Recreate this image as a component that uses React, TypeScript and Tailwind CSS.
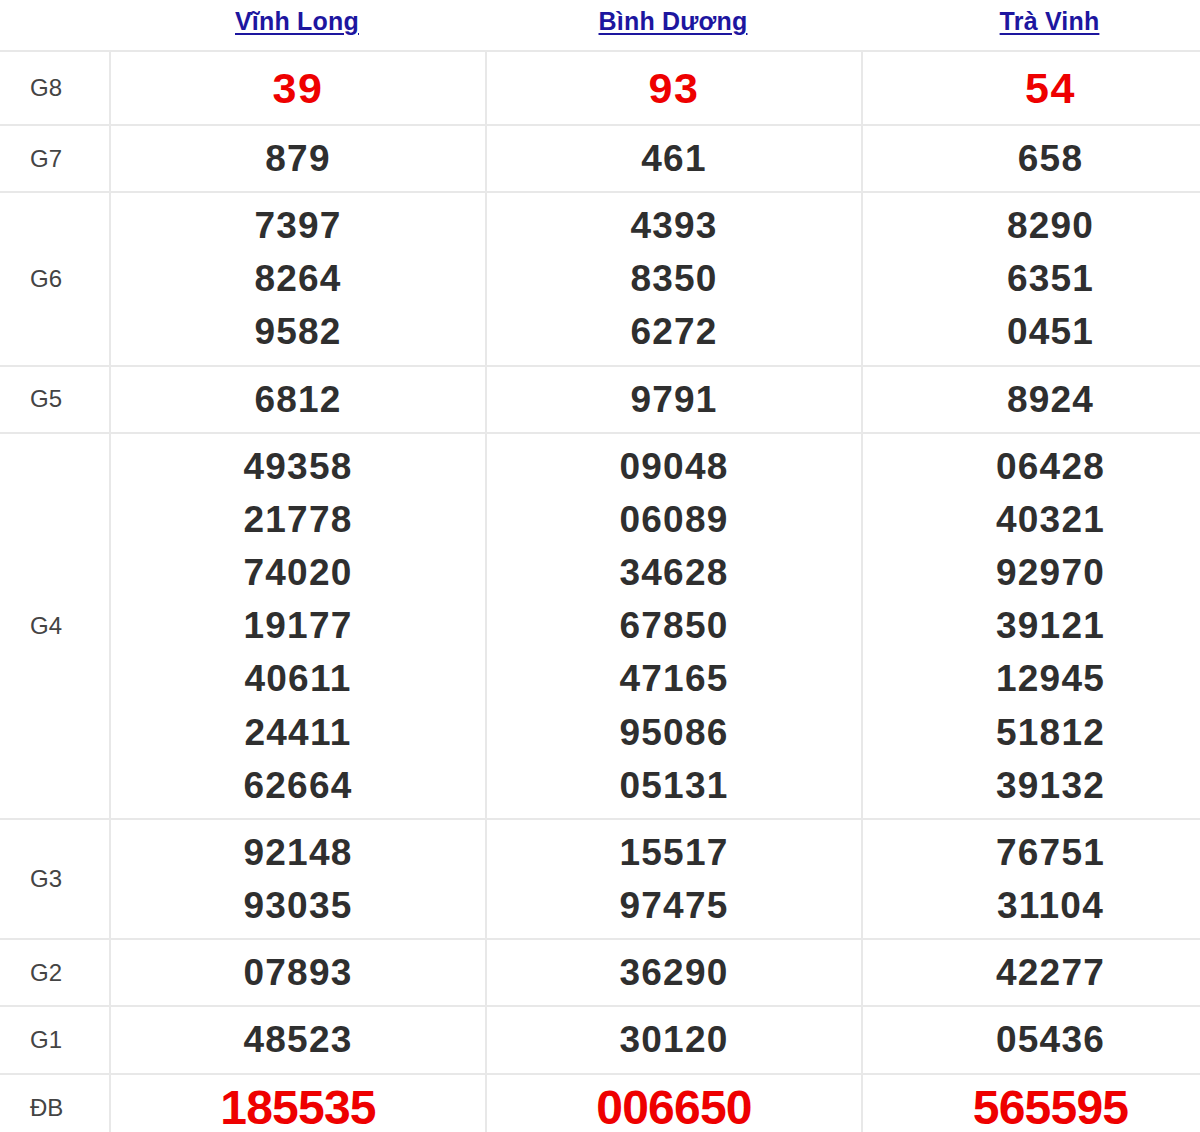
import React from "react";

interface PrizeRow {
  label: string;
  values: string[][];
  kind?: "small" | "big";
}

const provinces = ["Vĩnh Long", "Bình Dương", "Trà Vinh"];

const rows: PrizeRow[] = [
  { label: "G8", values: [["39"], ["93"], ["54"]], kind: "small" },
  { label: "G7", values: [["879"], ["461"], ["658"]] },
  {
    label: "G6",
    values: [
      ["7397", "8264", "9582"],
      ["4393", "8350", "6272"],
      ["8290", "6351", "0451"],
    ],
  },
  { label: "G5", values: [["6812"], ["9791"], ["8924"]] },
  {
    label: "G4",
    values: [
      ["49358", "21778", "74020", "19177", "40611", "24411", "62664"],
      ["09048", "06089", "34628", "67850", "47165", "95086", "05131"],
      ["06428", "40321", "92970", "39121", "12945", "51812", "39132"],
    ],
  },
  {
    label: "G3",
    values: [
      ["92148", "93035"],
      ["15517", "97475"],
      ["76751", "31104"],
    ],
  },
  { label: "G2", values: [["07893"], ["36290"], ["42277"]] },
  { label: "G1", values: [["48523"], ["30120"], ["05436"]] },
  { label: "ĐB", values: [["185535"], ["006650"], ["565595"]], kind: "big" },
];

const font = { fontFamily: '"Liberation Sans", Arial, sans-serif' };

const NumberCell: React.FC<{ nums: string[]; kind?: "small" | "big" }> = ({
  nums,
  kind,
}) => {
  let cls = "text-[37px] leading-[53.15px] tracking-[1.2px] text-[#2f2f2f]";
  if (kind === "small") {
    cls = "text-[43px] leading-[60px] tracking-[1.5px] text-[#ee0000]";
  }
  if (kind === "big") {
    cls = "text-[48px] leading-[54px] tracking-[-0.8px] text-[#ee0000]";
  }
  return (
    <div className="border-l-2 border-[#e8e8e8] py-[6px] flex flex-col items-center">
      {nums.map((n, i) => (
        <div key={i} className={`font-bold ${cls}`}>
          {n}
        </div>
      ))}
    </div>
  );
};

const App: React.FC = () => {
  return (
    <div className="w-[1200px] h-[1132px] overflow-hidden bg-white" style={font}>
      <div className="w-[1238px]">
        <div className="grid grid-cols-[109px_376px_376px_377px] h-[52px] border-b-2 border-[#e8e8e8]">
          <div></div>
          {provinces.map((p) => (
            <div key={p} className="flex justify-center pt-[3px]">
              <a
                href="#"
                className="text-[25px] font-bold underline underline-offset-[3px] decoration-[2px] text-[#1d169f] tracking-[0.2px]"
              >
                {p}
              </a>
            </div>
          ))}
        </div>
        {rows.map((row) => (
          <div
            key={row.label}
            className="grid grid-cols-[109px_376px_376px_377px] border-b-2 border-[#e8e8e8]"
          >
            <div className="flex items-center pl-[30px] text-[24px] text-[#444444]">
              {row.label}
            </div>
            {row.values.map((nums, i) => (
              <NumberCell key={i} nums={nums} kind={row.kind} />
            ))}
          </div>
        ))}
      </div>
    </div>
  );
};

export default App;
